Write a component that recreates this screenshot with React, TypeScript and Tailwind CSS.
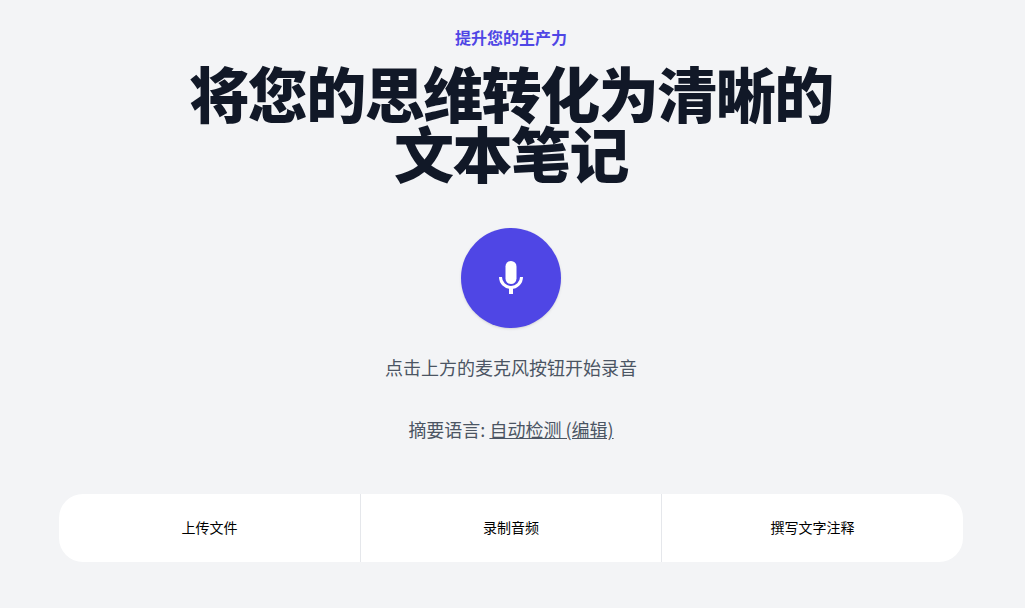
export default function App() {
  const font = { fontFamily: '"Noto Sans CJK SC", sans-serif' };
  return (
    <div style={font} className="min-h-[608px] bg-[#f3f4f6]">
      <div className="w-[1022px] flex flex-col items-center pt-[25px]">
        <p className="text-base leading-6 font-semibold text-[#4f46e5]">提升您的生产力</p>
        <h1 className="mt-[13px] w-[672px] text-center text-6xl leading-none font-extrabold tracking-tight text-[#111827]">
          将您的思维转化为清晰的文本笔记
        </h1>
        <button className="mt-[46px] w-[100px] h-[100px] rounded-full bg-[#4f46e5] shadow-sm flex items-center justify-center">
          <svg width="24" height="35" viewBox="0 0 24 35" fill="none">
            <rect x="6.5" y="0" width="11" height="23" rx="5.5" fill="#fff" />
            <path d="M1.5 16a10.5 10.5 0 0 0 21 0" stroke="#fff" strokeWidth="3" />
            <path d="M12 26v7" stroke="#fff" strokeWidth="4" />
          </svg>
        </button>
        <p className="mt-[25px] text-lg leading-7 text-[#4b5563]">点击上方的麦克风按钮开始录音</p>
        <p className="mt-[34px] text-lg leading-7 text-[#4b5563]">
          摘要语言: <span className="underline">自动检测 (编辑)</span>
        </p>
        <div className="mt-[51px] w-[904px] h-[68px] bg-white rounded-3xl grid grid-cols-[301px_301px_302px] overflow-hidden">
          <div className="flex items-center justify-center pb-[2px] text-sm text-black">上传文件</div>
          <div className="flex items-center justify-center pb-[2px] text-sm text-black border-l border-[#e5e7eb]">录制音频</div>
          <div className="flex items-center justify-center pb-[2px] text-sm text-black border-l border-[#e5e7eb]">撰写文字注释</div>
        </div>
      </div>
    </div>
  );
}
